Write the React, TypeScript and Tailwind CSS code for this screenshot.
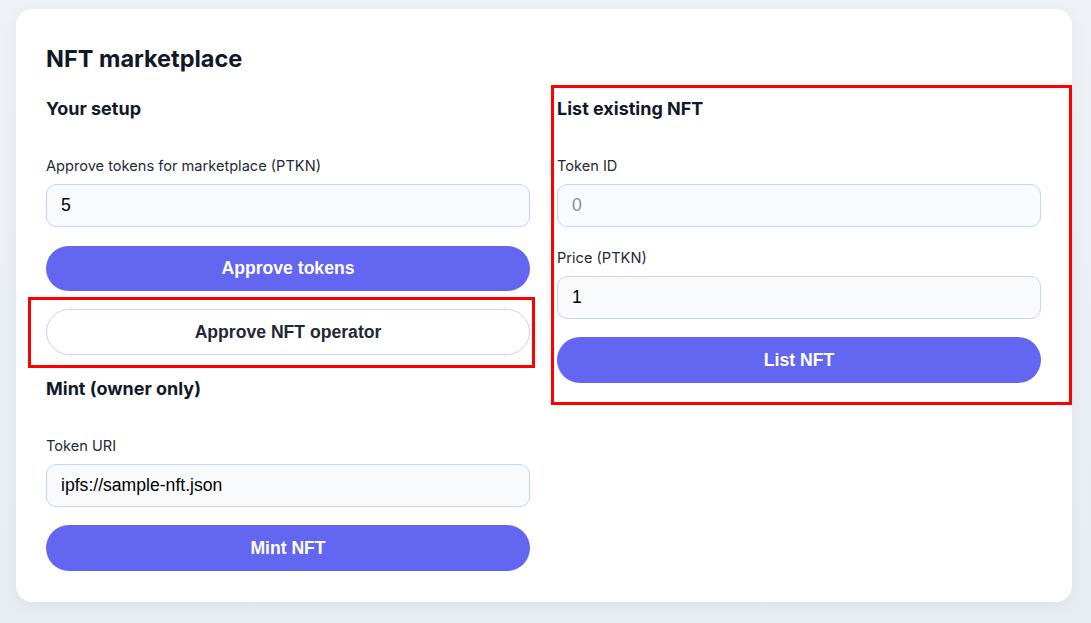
import React from "react";

// NFT marketplace panel: setup + mint on the left, listing form on the right.
// Red boxes are review annotations drawn over the two highlighted areas.
const sans = "font-['Inter','Noto_Sans',sans-serif]";
const arial = "font-['Liberation_Sans',Arial,sans-serif]";

const Label: React.FC<{ text: string; className?: string }> = ({ text, className = "" }) => (
  <div className={`text-[14.6px] leading-5 text-[#1f2937] ${className}`}>{text}</div>
);

const Field: React.FC<{ value?: string; placeholder?: string }> = ({ value, placeholder }) => (
  <input
    readOnly
    value={value}
    placeholder={placeholder}
    className={`${arial} mt-2 block h-[43px] w-full rounded-[10px] border border-[#c7d2fe] bg-[#f8fafc] px-[14px] text-[17.6px] text-black placeholder:text-[#8b8f97] outline-none`}
  />
);

const Primary: React.FC<{ children: React.ReactNode; className?: string }> = ({ children, className = "" }) => (
  <button
    className={`${arial} block h-[45px] w-full rounded-full bg-[#6366f1] text-[17.6px] font-bold text-white ${className}`}
  >
    {children}
  </button>
);

const Heading: React.FC<{ children: React.ReactNode; className?: string }> = ({ children, className = "" }) => (
  <h3 className={`text-[18px] font-bold leading-7 text-[#111827] ${className}`}>{children}</h3>
);

const Annotation: React.FC<{ className: string }> = ({ className }) => (
  <div className={`pointer-events-none absolute border-[3px] border-[#ff0000] ${className}`} />
);

export default function App() {
  return (
    <div className={`${sans} min-h-screen bg-gradient-to-b from-[#eef2f7] to-[#e8edf4] pl-4 pr-[19px] pt-[9px] pb-5`}>
      <div className="rounded-2xl bg-white pl-[30px] pr-[31px] pt-[31px] pb-[31px] shadow-[0_4px_16px_rgba(15,23,42,0.05)]">
        <h2 className="text-[23.5px] font-bold leading-[38px] text-[#111827]">NFT marketplace</h2>

        <div className="mt-[17px] grid grid-cols-2 gap-x-[27px]">
          <div>
            <Heading>Your setup</Heading>
            <Label text="Approve tokens for marketplace (PTKN)" className="mt-[33px]" />
            <Field value="5" />
            <Primary className="mt-[19px]">Approve tokens</Primary>
            <div className="relative mt-[18px]">
              <button
                className={`${arial} block h-[46px] w-full rounded-full border border-[#c7d2fe] bg-white text-[17.6px] font-bold text-[#1f2937]`}
              >
                Approve NFT operator
              </button>
              <Annotation className="-left-[18px] -right-[5px] -top-[12px] -bottom-[13px]" />
            </div>
            <Heading className="mt-[20px]">Mint (owner only)</Heading>
            <Label text="Token URI" className="mt-[33px]" />
            <Field value="ipfs://sample-nft.json" />
            <Primary className="mt-[18px] h-[46px]">Mint NFT</Primary>
          </div>

          <div className="relative self-start">
            <Heading>List existing NFT</Heading>
            <Label text="Token ID" className="mt-[33px]" />
            <Field placeholder="0" />
            <Label text="Price (PTKN)" className="mt-[21px]" />
            <Field value="1" />
            <Primary className="mt-[18px] h-[46px]">List NFT</Primary>
            <Annotation className="-left-[6px] -right-[31px] -top-[10px] -bottom-[22px]" />
          </div>
        </div>
      </div>
    </div>
  );
}
